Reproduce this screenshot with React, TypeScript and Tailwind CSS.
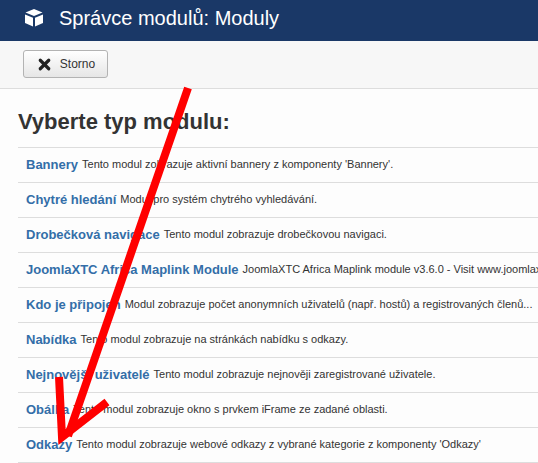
import React from 'react';
import { X } from 'lucide-react';

const modules = [
  { name: 'Bannery', text: "Tento modul zobrazuje aktivní bannery z komponenty 'Bannery'." },
  { name: 'Chytré hledání', text: 'Modul pro systém chytrého vyhledávání.' },
  { name: 'Drobečková navigace', text: 'Tento modul zobrazuje drobečkovou navigaci.' },
  { name: 'JoomlaXTC Africa Maplink Module', text: 'JoomlaXTC Africa Maplink module v3.6.0 - Visit www.joomlaxtc.com' },
  { name: 'Kdo je připojen', text: 'Modul zobrazuje počet anonymních uživatelů (např. hostů) a registrovaných členů...' },
  { name: 'Nabídka', text: 'Tento modul zobrazuje na stránkách nabídku s odkazy.' },
  { name: 'Nejnovější uživatelé', text: 'Tento modul zobrazuje nejnověji zaregistrované uživatele.' },
  { name: 'Obálka', text: 'Tento modul zobrazuje okno s prvkem iFrame ze zadané oblasti.' },
  { name: 'Odkazy', text: "Tento modul zobrazuje webové odkazy z vybrané kategorie z komponenty 'Odkazy'" },
];

function CubeIcon() {
  return (
    <svg width="20" height="20" viewBox="0 0 20 20" fill="#ffffff">
      <path d="M10 1 L18.5 4.5 L10 8 L1.5 4.5 Z" />
      <path d="M1 6.5 L9 9.8 L9 18.5 L1 15 Z" />
      <path d="M19 6.5 L11 9.8 L11 18.5 L19 15 Z" />
    </svg>
  );
}

export default function App() {
  return (
    <div className="relative w-[538px] h-[463px] overflow-hidden bg-white font-['Liberation_Sans',Arial,sans-serif]">
      <header className="h-[41px] bg-[#1a3867] flex items-center pl-[24px] pb-[5px] gap-[15px]">
        <CubeIcon />
        <h1 className="text-[20px] text-white whitespace-nowrap">Správce modulů: Moduly</h1>
      </header>

      <div className="h-[48px] bg-[#f7f7f7] border-b border-[#dddddd] pl-[23px] pt-[9px]">
        <button className="w-[85px] h-[28px] flex items-center justify-center gap-[7px] rounded-[3px] border border-[#b3b3b3] bg-gradient-to-b from-[#ffffff] to-[#e6e6e6] text-[12px] text-[#333333]">
          <X className="w-[17px] h-[17px]" strokeWidth={4.5} color="#222222" />
          Storno
        </button>
      </div>

      <main className="pl-[18px] bg-[#fdfdfd]">
        <h2 className="h-[58px] pt-[21px] text-[22px] leading-[24px] font-bold text-[#333333] whitespace-nowrap">Vyberte typ modulu:</h2>
        <ul className="border-t border-[#dddddd]">
          {modules.map((m) => (
            <li key={m.name} className="h-[35px] border-b border-[#dddddd] pl-[8px] pb-[1px] flex items-center whitespace-nowrap">
              <span className="text-[13px] font-bold text-[#336ea8]">{m.name}</span>
              <span className="ml-[4px] text-[11px] text-[#333333]">{m.text}</span>
            </li>
          ))}
        </ul>
      </main>

      <svg className="absolute inset-0" width="538" height="463" viewBox="0 0 538 463" fill="none" stroke="#ff0000" strokeWidth="8">
        <path d="M188 88 L68 436" />
        <path d="M59 377 L62 437 L107 402" />
      </svg>
    </div>
  );
}
